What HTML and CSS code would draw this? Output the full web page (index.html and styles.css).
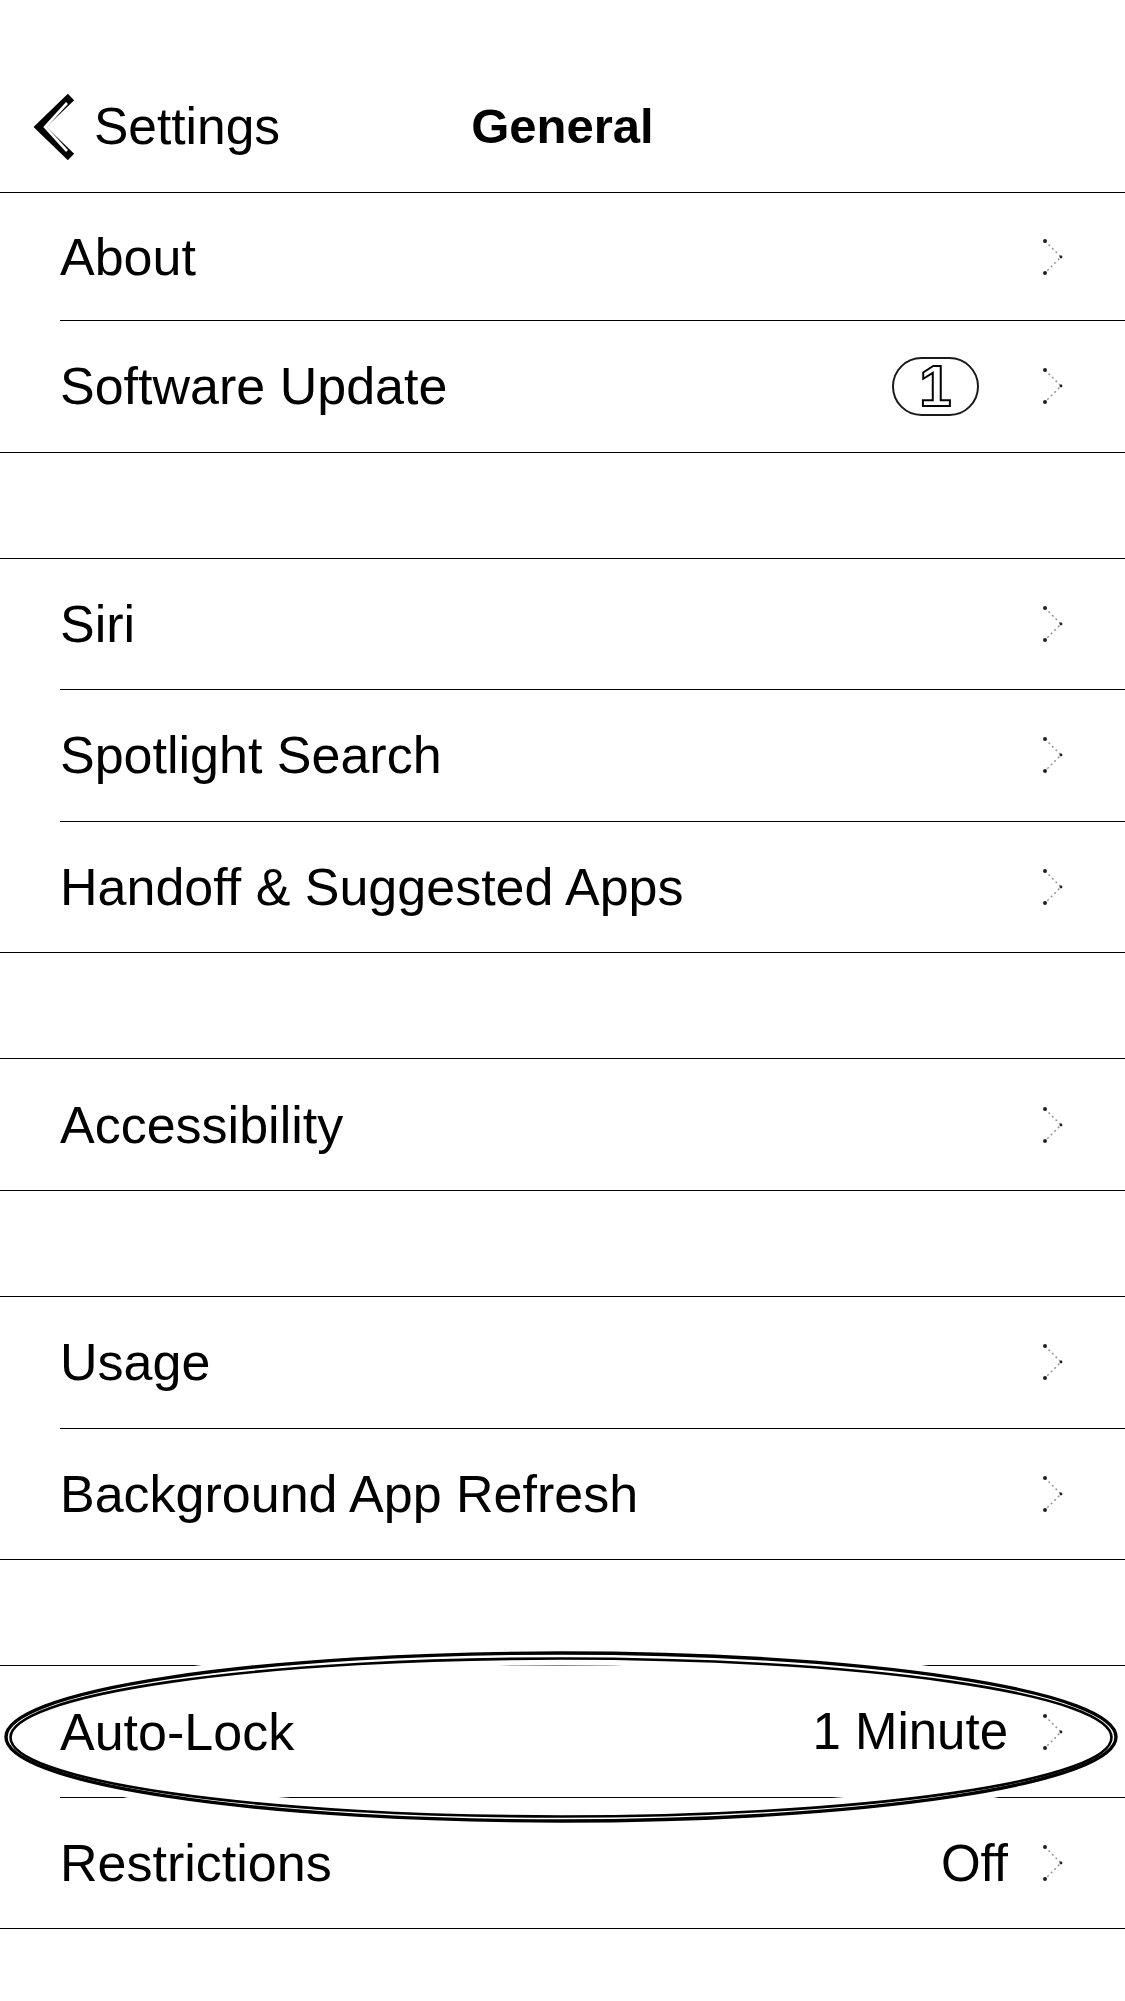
FILE: index.html
```html
<!DOCTYPE html>
<html lang="en">
<head>
<meta charset="utf-8">
<title>General</title>
<link rel="stylesheet" href="styles.css">
</head>
<body>
<div class="screen">
  <header class="nav">
    <div class="nav-left">
      <svg class="back-chevron" width="42" height="66" viewBox="0 0 42 66">
        <polyline points="37,3 6,33 37,63" fill="none" stroke="#000" stroke-width="9" stroke-linejoin="miter"/>
        <polyline points="33,9 11,33 33,57" fill="none" stroke="#fff" stroke-width="2.6" stroke-linejoin="miter"/>
      </svg>
      <span class="back-label">Settings</span>
    </div>
    <h1 class="nav-title">General</h1>
    <div class="nav-right"></div>
  </header>

  <section class="group group-first">
    <div class="cell"><div class="cell-body"><span class="label">About</span>
      <svg class="chev" viewBox="0 0 20 36"><polyline points="2,2 18,18 2,34"/><circle cx="2" cy="2" r="2"/><circle cx="18" cy="18" r="1.4"/><circle cx="2" cy="34" r="2"/></svg></div></div>
    <div class="cell"><div class="cell-body"><span class="label">Software Update</span>
      <span class="badge">1</span>
      <svg class="chev" viewBox="0 0 20 36"><polyline points="2,2 18,18 2,34"/><circle cx="2" cy="2" r="2"/><circle cx="18" cy="18" r="1.4"/><circle cx="2" cy="34" r="2"/></svg></div></div>
  </section>

  <section class="group">
    <div class="cell"><div class="cell-body"><span class="label">Siri</span>
      <svg class="chev" viewBox="0 0 20 36"><polyline points="2,2 18,18 2,34"/><circle cx="2" cy="2" r="2"/><circle cx="18" cy="18" r="1.4"/><circle cx="2" cy="34" r="2"/></svg></div></div>
    <div class="cell"><div class="cell-body"><span class="label">Spotlight Search</span>
      <svg class="chev" viewBox="0 0 20 36"><polyline points="2,2 18,18 2,34"/><circle cx="2" cy="2" r="2"/><circle cx="18" cy="18" r="1.4"/><circle cx="2" cy="34" r="2"/></svg></div></div>
    <div class="cell"><div class="cell-body"><span class="label">Handoff &amp; Suggested Apps</span>
      <svg class="chev" viewBox="0 0 20 36"><polyline points="2,2 18,18 2,34"/><circle cx="2" cy="2" r="2"/><circle cx="18" cy="18" r="1.4"/><circle cx="2" cy="34" r="2"/></svg></div></div>
  </section>

  <section class="group">
    <div class="cell"><div class="cell-body"><span class="label">Accessibility</span>
      <svg class="chev" viewBox="0 0 20 36"><polyline points="2,2 18,18 2,34"/><circle cx="2" cy="2" r="2"/><circle cx="18" cy="18" r="1.4"/><circle cx="2" cy="34" r="2"/></svg></div></div>
  </section>

  <section class="group">
    <div class="cell"><div class="cell-body"><span class="label">Usage</span>
      <svg class="chev" viewBox="0 0 20 36"><polyline points="2,2 18,18 2,34"/><circle cx="2" cy="2" r="2"/><circle cx="18" cy="18" r="1.4"/><circle cx="2" cy="34" r="2"/></svg></div></div>
    <div class="cell"><div class="cell-body"><span class="label">Background App Refresh</span>
      <svg class="chev" viewBox="0 0 20 36"><polyline points="2,2 18,18 2,34"/><circle cx="2" cy="2" r="2"/><circle cx="18" cy="18" r="1.4"/><circle cx="2" cy="34" r="2"/></svg></div></div>
  </section>

  <section class="group">
    <svg class="annotation" width="1125" height="200" viewBox="0 0 1125 200">
      <ellipse class="halo" cx="561" cy="97" rx="554" ry="81.5"/>
      <ellipse class="ring ring-outer" cx="561" cy="97" rx="555" ry="84"/>
      <ellipse class="ring ring-inner" cx="561" cy="97.5" rx="550.5" ry="79"/>
    </svg>
    <div class="cell"><div class="cell-body"><span class="label">Auto-Lock</span>
      <span class="value">1 Minute</span>
      <svg class="chev" viewBox="0 0 20 36"><polyline points="2,2 18,18 2,34"/><circle cx="2" cy="2" r="2"/><circle cx="18" cy="18" r="1.4"/><circle cx="2" cy="34" r="2"/></svg></div></div>
    <div class="cell"><div class="cell-body"><span class="label">Restrictions</span>
      <span class="value">Off</span>
      <svg class="chev" viewBox="0 0 20 36"><polyline points="2,2 18,18 2,34"/><circle cx="2" cy="2" r="2"/><circle cx="18" cy="18" r="1.4"/><circle cx="2" cy="34" r="2"/></svg></div></div>
  </section>
</div>
</body>
</html>
```

FILE: styles.css
```css
* {
  box-sizing: border-box;
}

html, body {
  margin: 0;
  padding: 0;
  background: #fff;
}

body {
  font-family: "Liberation Sans", Arial, Helvetica, sans-serif;
  color: #000;
}

.screen {
  width: 1125px;
  min-height: 2001px;
  background: #fff;
}

/* Navigation bar */
.nav {
  height: 193px;
  padding-top: 61px;
  border-bottom: 1px solid #000;
  display: grid;
  grid-template-columns: 1fr auto 1fr;
  align-items: center;
}

.nav-left {
  display: flex;
  align-items: center;
  padding-left: 34px;
}

.back-chevron {
  display: block;
  flex: none;
  margin-right: 18px;
}

.back-label {
  font-size: 51.5px;
  line-height: 1;
}

.nav-title {
  margin: 0;
  font-size: 49px;
  font-weight: 700;
  line-height: 1;
}

/* Grouped table */
.group {
  position: relative;
  margin-top: 105.2px;
  border-top: 1px solid #000;
  border-bottom: 1px solid #000;
}

.group-first {
  margin-top: 0;
  border-top: none;
}

.cell {
  padding-left: 60px;
}

.cell-body {
  display: flex;
  align-items: center;
  height: 131.5px;
  padding-right: 62px;
  border-bottom: 1px solid #000;
}

.cell:last-child .cell-body {
  height: 130.5px;
  border-bottom: none;
}

.group-first .cell-body {
  height: 128px;
}

.group-first .cell:last-child .cell-body {
  height: 130.5px;
}

.label {
  flex: 1;
  font-size: 52px;
  line-height: 1;
  white-space: nowrap;
}

.value {
  font-size: 51px;
  line-height: 1;
  margin-right: 35px;
}

.badge {
  display: flex;
  align-items: center;
  justify-content: center;
  width: 87px;
  height: 59px;
  margin-right: 64px;
  border: 2.5px solid #1a1a1a;
  border-radius: 30px;
  font-size: 58px;
  font-weight: 700;
  line-height: 1;
  color: #fff;
  -webkit-text-stroke: 2px #000;
}

.chev {
  display: block;
  flex: none;
  width: 20px;
  height: 36px;
  overflow: visible;
}

.chev polyline {
  fill: none;
  stroke: #9a9a9a;
  stroke-width: 1.6;
  stroke-dasharray: 2 3;
}

.chev circle {
  fill: #222;
}

/* Hand-drawn highlight around Auto-Lock */
.annotation {
  position: absolute;
  left: 0;
  top: -26px;
  pointer-events: none;
}

.annotation .halo {
  fill: none;
  stroke: #fff;
  stroke-width: 20;
}

.annotation .ring {
  fill: none;
  stroke: #000;
}

.annotation .ring-outer {
  stroke-width: 3.4;
}

.annotation .ring-inner {
  stroke-width: 2.6;
}
```
